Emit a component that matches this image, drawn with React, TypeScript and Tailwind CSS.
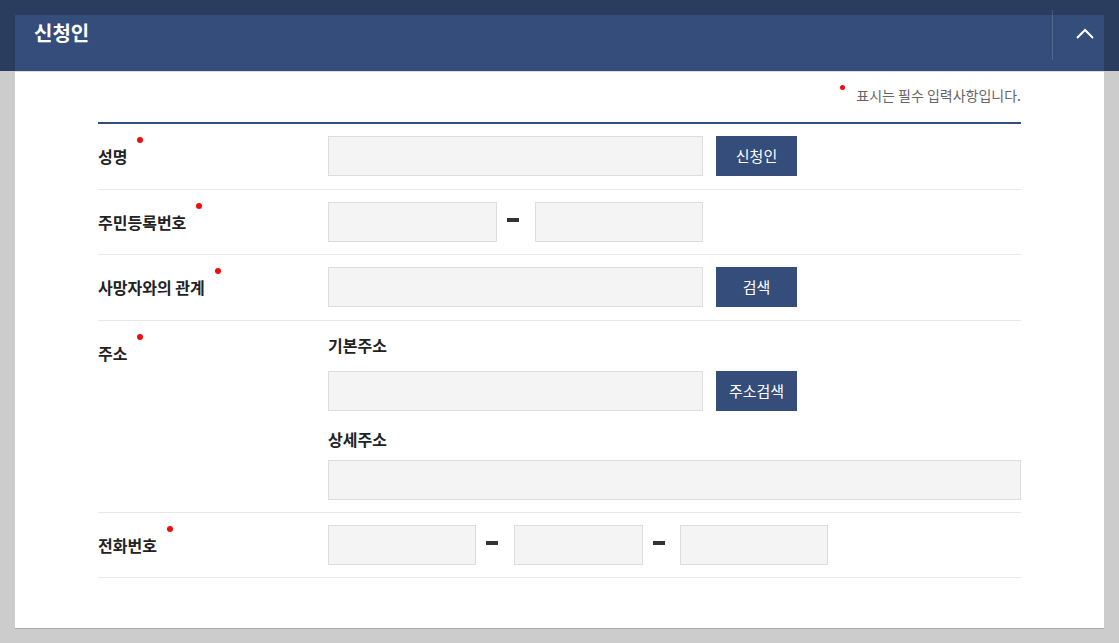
import type { ReactNode } from "react";

const font = { fontFamily: '"Noto Sans CJK KR", "Noto Sans", sans-serif' };

function Required({ children }: { children: ReactNode }) {
  return (
    <span className="relative inline-block text-[16px] leading-6 font-bold text-[#222]">
      {children}
      <span className="absolute top-[-7px] right-[-16px] h-[6px] w-[6px] rounded-full bg-[#f00d0d]" />
    </span>
  );
}

function Field({ width }: { width: string }) {
  return <div className={`h-10 shrink-0 border border-[#dddddd] bg-[#f4f4f4] ${width}`} />;
}

function Dash({ tight }: { tight?: boolean }) {
  return (
    <div
      className={`ml-[10px] mb-[4px] h-[4px] w-3 shrink-0 bg-[#333] ${tight ? "mr-[15px]" : "mr-[16px]"}`}
    />
  );
}

function NavyButton({ label }: { label: string }) {
  return (
    <button
      type="button"
      className="ml-[13px] h-10 w-[81px] shrink-0 bg-[#344d7a] text-[15px] text-white"
    >
      {label}
    </button>
  );
}

function Row({ label, children }: { label: string; children: ReactNode }) {
  return (
    <div className="flex items-start border-b border-[#e8e8e8] py-[12.3px]">
      <div className="flex h-10 w-[230px] shrink-0 items-center">
        <Required>{label}</Required>
      </div>
      <div className="flex-1">{children}</div>
    </div>
  );
}

export default function App() {
  return (
    <div className="min-h-screen bg-[#cccccc]" style={font}>
      {/* Header band */}
      <div className="bg-[#2a3d5e] px-[15px] pt-[15px]">
        <div className="relative h-[56px] bg-[#344d7a]">
          <div className="flex h-[36px] items-center justify-between pl-[19px] pr-[10px]">
            <h2 className="text-[20px] leading-none font-bold text-white">신청인</h2>
            <button type="button" className="flex h-[20px] w-[18px] items-center justify-center">
              <svg width="18" height="11" viewBox="0 0 18 11" fill="none">
                <polyline points="1,10 9,2 17,10" stroke="#fff" strokeWidth="2" />
              </svg>
            </button>
          </div>
          <span className="absolute right-[51px] top-[-5px] h-[50px] w-px bg-white/15" />
        </div>
      </div>

      {/* Form panel */}
      <div className="mx-[15px] border-t border-[#dddddd] border-b border-b-[#aaaaaa] bg-white px-[83px] pb-[50px] pt-3">
        <div className="mb-4 flex items-start justify-end text-[14px] leading-[22px] text-[#666]">
          <span className="mt-[1px] mr-[11px] h-[5px] w-[5px] rounded-full bg-[#f00d0d]" />
          <span>표시는 필수 입력사항입니다.</span>
        </div>

        <div className="border-t-2 border-[#344d7a]">
          <Row label="성명">
            <div className="flex items-center">
              <Field width="w-[375px]" />
              <NavyButton label="신청인" />
            </div>
          </Row>

          <Row label="주민등록번호">
            <div className="flex items-center">
              <Field width="w-[169px]" />
              <Dash />
              <Field width="w-[168px]" />
            </div>
          </Row>

          <Row label="사망자와의 관계">
            <div className="flex items-center">
              <Field width="w-[375px]" />
              <NavyButton label="검색" />
            </div>
          </Row>

          <Row label="주소">
            <div className="flex flex-col">
              <p className="h-6 text-[16px] leading-6 font-bold text-[#222]">기본주소</p>
              <div className="mt-[14px] flex items-center">
                <Field width="w-[375px]" />
                <NavyButton label="주소검색" />
              </div>
              <p className="mt-[15.5px] h-6 text-[16px] leading-6 font-bold text-[#222]">상세주소</p>
              <div className="mt-[9px] h-10 w-full border border-[#dddddd] bg-[#f4f4f4]" />
            </div>
          </Row>

          <Row label="전화번호">
            <div className="flex items-center">
              <Field width="w-[148px]" />
              <Dash />
              <Field width="w-[129px]" />
              <Dash tight />
              <Field width="w-[148px]" />
            </div>
          </Row>
        </div>
      </div>
    </div>
  );
}
